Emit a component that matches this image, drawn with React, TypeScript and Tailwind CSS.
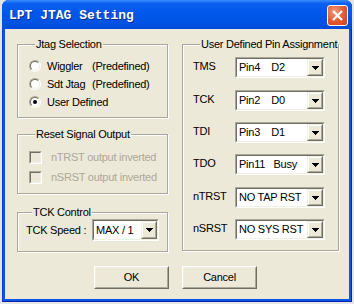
import React from "react";

function Radio({ checked }: { checked?: boolean }) {
  return (
    <span className="w-[12px] h-[12px] rounded-full border border-t-[#ACA899] border-l-[#ACA899] border-b-white border-r-white flex items-center justify-center shrink-0">
      <span className="w-[10px] h-[10px] rounded-full border border-t-[#716F64] border-l-[#716F64] border-b-[#F1EFE2] border-r-[#F1EFE2] bg-white flex items-center justify-center">
        {checked && <span className="w-[4px] h-[4px] rounded-full bg-black" />}
      </span>
    </span>
  );
}

function Check() {
  return (
    <span className="w-[13px] h-[13px] border border-t-[#ACA899] border-l-[#ACA899] border-b-white border-r-white shrink-0 flex">
      <span className="flex-1 border border-t-[#716F64] border-l-[#716F64] border-b-[#F1EFE2] border-r-[#F1EFE2] bg-[#ECE9D8]" />
    </span>
  );
}

function DropBtn() {
  return (
    <span className="w-[16px] h-full border border-t-[#F1EFE2] border-l-[#F1EFE2] border-b-[#716F64] border-r-[#716F64] bg-[#ECE9D8] flex shrink-0">
      <span className="flex-1 border border-t-white border-l-white border-b-[#ACA899] border-r-[#ACA899] flex items-center justify-center">
        <svg width="7" height="4" viewBox="0 0 7 4" shapeRendering="crispEdges">
          <rect x="0" y="0" width="7" height="1" fill="#000" />
          <rect x="1" y="1" width="5" height="1" fill="#000" />
          <rect x="2" y="2" width="3" height="1" fill="#000" />
          <rect x="3" y="3" width="1" height="1" fill="#000" />
        </svg>
      </span>
    </span>
  );
}

function Combo({ value, wide }: { value: string; wide?: boolean }) {
  return (
    <div
      className={`${wide ? "w-[90px] h-[21px]" : "w-[67px] h-[22px]"} border border-t-[#ACA899] border-l-[#ACA899] border-b-white border-r-white flex shrink-0`}
    >
      <div className="flex-1 border border-t-[#716F64] border-l-[#716F64] border-b-[#F1EFE2] border-r-[#F1EFE2] bg-white flex items-center">
        <span className="flex-1 pl-[2px] whitespace-pre leading-none">{value}</span>
        <DropBtn />
      </div>
    </div>
  );
}

function Btn({ children }: { children: React.ReactNode }) {
  return (
    <div className="w-[75px] h-[23px] border border-t-white border-l-white border-b-[#716F64] border-r-[#716F64] bg-[#ECE9D8] flex">
      <div className="flex-1 border border-t-[#F1EFE2] border-l-[#F1EFE2] border-b-[#ACA899] border-r-[#ACA899] flex items-center justify-center">
        {children}
      </div>
    </div>
  );
}

const groupCls =
  "border border-[#ACA899] shadow-[1px_1px_0_#ffffff,inset_1px_1px_0_#ffffff]";

function Legend({ children, right }: { children: React.ReactNode; right?: boolean }) {
  return (
    <legend className={`${right ? "ml-[7px]" : "ml-[6px]"} px-[1px] leading-[12px] whitespace-nowrap bg-[#ECE9D8]`}>
      {children}
    </legend>
  );
}

export default function App() {
  const pins: [string, string, string][] = [
    ["TMS", "Pin4    D2", "mt-0"],
    ["TCK", "Pin2    D0", "mt-[12px]"],
    ["TDI", "Pin3    D1", "mt-[11px]"],
    ["TDO", "Pin11   Busy", "mt-[11px]"],
    ["nTRST", "NO TAP RST", "mt-[12px]"],
    ["nSRST", "NO SYS RST", "mt-[11px]"],
  ];
  return (
    <div className="w-[354px] h-[304px] bg-[#E4E4E4] font-['Liberation_Sans',Arial,sans-serif] text-[11px] tracking-[-0.25px] text-black">
      <div className="ml-[2px] w-[350px] h-[302px] rounded-t-[7px] bg-[#0A55E8] flex flex-col shadow-[inset_-1px_-1px_0_#0026A8,inset_1px_0_0_#0A3FD0]">
        <div className="h-[29px] shrink-0 flex items-center justify-between pt-[2px] pl-[7px] pr-[4px] rounded-t-[7px] bg-[linear-gradient(to_bottom,#3C8DF8_0%,#0B60F0_12%,#0057EA_45%,#0052E2_80%,#0049D8_100%)]">
          <span className="font-['Liberation_Mono',monospace] font-bold text-[13px] tracking-normal text-white [text-shadow:1px_1px_0_#0B2A8A]">
            LPT JTAG Setting
          </span>
          <div className="w-[21px] h-[21px] rounded-[3px] border border-white bg-[radial-gradient(circle_at_35%_30%,#F29A78,#E2582F_55%,#C9431C)] flex items-center justify-center">
            <svg width="11" height="11" viewBox="0 0 11 11">
              <path d="M1.8 1.8L9.2 9.2M9.2 1.8L1.8 9.2" stroke="#ffffff" strokeWidth="2.2" strokeLinecap="square" />
            </svg>
          </div>
        </div>
        <div className="mx-[3px] h-[270px] bg-[#ECE9D8] flex flex-col pt-[9px] pl-[12px]">
          <div className="flex gap-[14px] items-start">
            <div className="w-[151px] flex flex-col">
              <fieldset className={`${groupCls} h-[80px] pt-[7px] pl-[11px]`}>
                <Legend>Jtag Selection</Legend>
                <div className="h-[18px] flex items-center">
                  <Radio />
                  <span className="ml-[6px] w-[45px] whitespace-pre">Wiggler</span>
                  <span>(Predefined)</span>
                </div>
                <div className="h-[18px] flex items-center">
                  <Radio />
                  <span className="ml-[6px] w-[45px] whitespace-pre">Sdt Jtag</span>
                  <span>(Predefined)</span>
                </div>
                <div className="h-[18px] flex items-center">
                  <Radio checked />
                  <span className="ml-[6px]">User Defined</span>
                </div>
              </fieldset>
              <fieldset className={`${groupCls} h-[66px] mt-[10px] pt-[7px] pl-[11px]`}>
                <Legend>Reset Signal Output</Legend>
                <div className="h-[20px] flex items-center">
                  <Check />
                  <span className="ml-[9px] text-[#ACA899]">nTRST output inverted</span>
                </div>
                <div className="h-[20px] flex items-center">
                  <Check />
                  <span className="ml-[9px] text-[#ACA899]">nSRST output inverted</span>
                </div>
              </fieldset>
              <fieldset className={`${groupCls} h-[46px] mt-[12px] pt-[1px] pl-[8px]`}>
                <Legend>TCK Control</Legend>
                <div className="flex items-center">
                  <span className="w-[66px]">TCK Speed :</span>
                  <Combo value="MAX / 1" />
                </div>
              </fieldset>
            </div>
            <fieldset className={`${groupCls} w-[155px] h-[213px] pt-[7px] pl-[10px]`}>
              <Legend right>User Defined Pin Assignment</Legend>
              {pins.map(([label, val, mt]) => (
                <div key={label} className={`flex items-center ${mt}`}>
                  <span className="w-[42px] pb-[2px]">{label}</span>
                  <Combo value={val} wide />
                </div>
              ))}
            </fieldset>
          </div>
          <div className="flex gap-[13px] mt-[14px] pl-[77px]">
            <Btn>OK</Btn>
            <Btn>Cancel</Btn>
          </div>
        </div>
      </div>
    </div>
  );
}
